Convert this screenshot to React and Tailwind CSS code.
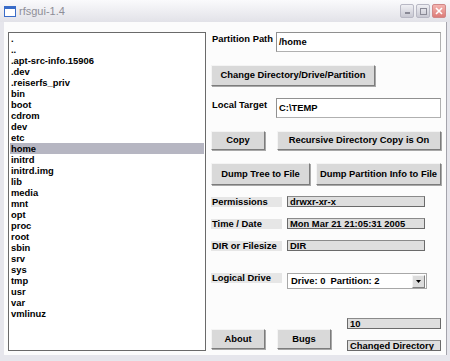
import React from "react";

const files = [
  ".", "..", ".apt-src-info.15906", ".dev", ".reiserfs_priv", "bin", "boot", "cdrom",
  "dev", "etc", "home", "initrd", "initrd.img", "lib", "media", "mnt", "opt", "proc",
  "root", "sbin", "srv", "sys", "tmp", "usr", "var", "vmlinuz",
];

const Btn = ({ children, className = "" }) => (
  <div
    className={`flex items-center justify-center bg-[#d9d9d9] border border-t-[#f4f4f4] border-l-[#f4f4f4] border-b-[#7c7c7c] border-r-[#7c7c7c] shadow-[1px_1px_0_#a8a8a8] font-bold text-[9.4px] text-black ${className}`}
  >
    {children}
  </div>
);

const Field = ({ children, className = "" }) => (
  <div
    className={`h-[11px] bg-[#dedede] border border-[#6a6a6a] border-t-[#8a8a8a] font-bold text-[9.4px] leading-[10px] pl-[2px] text-black overflow-hidden ${className}`}
  >
    {children}
  </div>
);

const InfoRow = ({ label, value, className = "" }) => (
  <div className={`flex items-center ${className}`}>
    <div className="w-[71px] h-[10px] bg-[#e6e6e6] font-bold text-[9.4px] leading-[10px] pl-[1px]">{label}</div>
    <Field className="ml-[5px] w-[138px]">{value}</Field>
  </div>
);

const TitleButtons = () => (
  <div className="flex gap-[2px] mr-[4px]">
    <div className="w-[14px] h-[14px] rounded-[2px] border border-[#b8b8c4] bg-gradient-to-b from-[#f0f0f4] to-[#c8c8d2] flex items-end justify-center pb-[3px]">
      <div className="w-[5px] h-[2px] bg-[#8a8a96]" />
    </div>
    <div className="w-[14px] h-[14px] rounded-[2px] border border-[#b8b8c4] bg-gradient-to-b from-[#f0f0f4] to-[#c8c8d2] flex items-center justify-center">
      <div className="w-[7px] h-[7px] border border-[#8a8a96]" />
    </div>
    <div className="w-[14px] h-[14px] rounded-[2px] border border-[#d08888] bg-gradient-to-b from-[#f4b4b0] to-[#dc7c78] flex items-center justify-center">
      <svg width="8" height="8" viewBox="0 0 8 8">
        <path d="M1 1L7 7M7 1L1 7" stroke="#fff" strokeWidth="1.6" />
      </svg>
    </div>
  </div>
);

export default function App() {
  return (
    <div className="w-[450px] h-[361px] bg-[#e6e6ec] flex flex-col font-['Liberation_Sans',Arial,sans-serif] text-black overflow-hidden">
      {/* title bar */}
      <div className="h-[22px] flex items-center bg-gradient-to-b from-[#fafafc] to-[#e2e2e8]">
        <svg className="ml-[4px]" width="12" height="11" viewBox="0 0 12 11">
          <rect x="0.5" y="0.5" width="11" height="10" fill="#fff" stroke="#3a6cc8" />
          <rect x="0.5" y="0.5" width="11" height="2.5" fill="#3a6cc8" />
        </svg>
        <span className="ml-[3px] text-[11px] text-[#8e8e98]">rfsgui-1.4</span>
        <div className="flex-1" />
        <TitleButtons />
      </div>

      {/* body */}
      <div className="flex-1 ml-[4px] mr-[3px] mb-[6px] bg-[#fcfcfc] border-r border-[#a4a4ac] flex pt-[10px] pl-[4px]">
        {/* file list */}
        <div className="w-[198px] h-[319px] border border-[#6a6a6a] bg-white pt-[0px] pl-[1px] pr-[1px]">
          {files.map((f) => (
            <div
              key={f}
              className={`h-[11px] leading-[11px] pl-[1px] font-bold text-[9.4px] ${f === "home" ? "bg-[#b6b6c2]" : ""}`}
            >
              {f}
            </div>
          ))}
        </div>

        {/* right panel */}
        <div className="ml-[5px] w-[231px] flex flex-col">
          <div className="flex">
            <div className="w-[65px] font-bold text-[9.4px] leading-[12px] pt-[1px] pl-[1px]">Partition Path</div>
            <div className="w-[165px] h-[20px] border border-[#b0b0b0] border-t-[#909090] border-l-[#909090] bg-white font-bold text-[9.4px] pl-[2px] pt-[3px] leading-[11px]">/home</div>
          </div>

          <Btn className="mt-[13px] w-[164px] h-[21px]">Change Directory/Drive/Partition</Btn>

          <div className="flex mt-[12px]">
            <div className="w-[65px] font-bold text-[9.4px] leading-[12px] pt-[1px] pl-[1px]">Local Target</div>
            <div className="w-[165px] h-[20px] border border-[#b0b0b0] border-t-[#909090] border-l-[#909090] bg-white font-bold text-[9.4px] pl-[2px] pt-[3px] leading-[11px]">C:\TEMP</div>
          </div>

          <div className="flex mt-[13px]">
            <Btn className="w-[54px] h-[19px]">Copy</Btn>
            <Btn className="ml-[12px] w-[164px] h-[19px]">Recursive Directory Copy is On</Btn>
          </div>

          <div className="flex mt-[13px]">
            <Btn className="w-[99px] h-[22px]">Dump Tree to File</Btn>
            <Btn className="ml-[6px] w-[125px] h-[22px]">Dump Partition Info to File</Btn>
          </div>

          <InfoRow className="mt-[11px]" label="Permissions" value="drwxr-xr-x" />
          <InfoRow className="mt-[11px]" label="Time / Date" value="Mon Mar 21 21:05:31 2005" />
          <InfoRow className="mt-[11px]" label="DIR or Filesize" value="DIR" />

          <div className="flex items-start mt-[22px]">
            <div className="w-[71px] h-[10px] bg-[#e6e6e6] font-bold text-[9.4px] leading-[10px] pl-[1px]">Logical Drive</div>
            <div className="ml-[5px] w-[140px] h-[16px] bg-white border border-[#a8a8a8] flex items-center">
              <span className="flex-1 pl-[3px] font-bold text-[9.4px] whitespace-pre">Drive: 0  Partition: 2</span>
              <div className="w-[13px] h-[13px] mr-[1px] bg-[#dcdcdc] border border-t-[#f4f4f4] border-l-[#f4f4f4] border-b-[#808080] border-r-[#808080] flex items-center justify-center">
                <svg width="5" height="3" viewBox="0 0 5 3">
                  <path d="M0 0H5L2.5 3Z" fill="#000" />
                </svg>
              </div>
            </div>
          </div>

          <div className="flex mt-[29px]">
            <Btn className="mt-[11px] w-[54px] h-[20px]">About</Btn>
            <Btn className="mt-[11px] ml-[12px] w-[54px] h-[20px]">Bugs</Btn>
            <div className="ml-[16px] flex flex-col gap-[11px]">
              <Field className="w-[94px]">10</Field>
              <Field className="w-[94px]">Changed Directory</Field>
            </div>
          </div>
        </div>
      </div>
    </div>
  );
}
